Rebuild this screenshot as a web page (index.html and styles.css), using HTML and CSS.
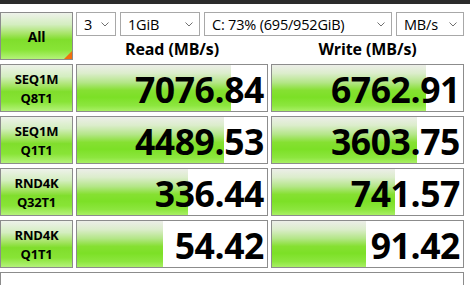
FILE: index.html
```html
<!DOCTYPE html>
<html>
<head>
<meta charset="utf-8">
<link rel="stylesheet" href="styles.css">
</head>
<body>
<div class="topbar"></div>
<div class="main">
  <div class="btn all">All<span class="corner"></span></div>
  <div class="head">
    <div class="combos">
      <div class="combo c1"><span>3</span><svg class="chev" width="8" height="5" viewBox="0 0 8 5"><polyline points="0.5,0.5 4,4 7.5,0.5" fill="none" stroke="#707070" stroke-width="1"/></svg></div>
      <div class="combo c2"><span>1GiB</span><svg class="chev" width="8" height="5" viewBox="0 0 8 5"><polyline points="0.5,0.5 4,4 7.5,0.5" fill="none" stroke="#707070" stroke-width="1"/></svg></div>
      <div class="combo c3"><span>C: 73% (695/952GiB)</span><svg class="chev" width="8" height="5" viewBox="0 0 8 5"><polyline points="0.5,0.5 4,4 7.5,0.5" fill="none" stroke="#707070" stroke-width="1"/></svg></div>
      <div class="combo c4"><span>MB/s</span><svg class="chev" width="8" height="5" viewBox="0 0 8 5"><polyline points="0.5,0.5 4,4 7.5,0.5" fill="none" stroke="#707070" stroke-width="1"/></svg></div>
    </div>
    <div class="titles">
      <div class="title">Read (MB/s)</div>
      <div class="title">Write (MB/s)</div>
    </div>
  </div>

  <div class="btn label"><span>SEQ1M</span><span>Q8T1</span></div>
  <div class="cell"><div class="bar" style="width:154px"></div><span class="num">7076.84</span></div>
  <div class="cell"><div class="bar" style="width:154px"></div><span class="num">6762.91</span></div>

  <div class="btn label"><span>SEQ1M</span><span>Q1T1</span></div>
  <div class="cell"><div class="bar" style="width:147px"></div><span class="num">4489.53</span></div>
  <div class="cell"><div class="bar" style="width:145px"></div><span class="num">3603.75</span></div>

  <div class="btn label"><span>RND4K</span><span>Q32T1</span></div>
  <div class="cell"><div class="bar" style="width:111px"></div><span class="num">336.44</span></div>
  <div class="cell"><div class="bar" style="width:123px"></div><span class="num">741.57</span></div>

  <div class="btn label"><span>RND4K</span><span>Q1T1</span></div>
  <div class="cell"><div class="bar" style="width:86px"></div><span class="num">54.42</span></div>
  <div class="cell"><div class="bar" style="width:94px"></div><span class="num">91.42</span></div>

  <div class="comment"></div>
</div>
</body>
</html>
```

FILE: styles.css
```css
* { box-sizing: border-box; }
html, body { margin: 0; padding: 0; background: #fff; overflow: hidden; }
body { width: 470px; height: 285px; font-family: "Open Sans", "Noto Sans", sans-serif; color: #000; }

.topbar { height: 4px; background: #2b2b2b; }

.main {
  padding-top: 8px;
  display: grid;
  grid-template-columns: 73px 192px 193px;
  grid-template-rows: 48px 48px 48px 48px 48px 13px;
  column-gap: 3px;
  row-gap: 4px;
}

.btn {
  border: 1px solid #8c8c8c;
  background: linear-gradient(to bottom, #eef2ea 0%, #d4eec0 25%, #a6e466 45%, #80de2c 58%, #88e436 80%, #b4f27a 100%);
  font-weight: 700;
  font-size: 13px;
  position: relative;
  display: flex;
  align-items: center;
  justify-content: center;
}
.all { font-size: 14px; letter-spacing: -0.3px; }
.corner {
  position: absolute; right: 0; bottom: 0;
  width: 0; height: 0;
  border-left: 8px solid transparent;
  border-bottom: 8px solid #f07010;
}
.label { flex-direction: column; line-height: 19px; letter-spacing: -0.2px; padding-top: 1px; }

.head { grid-column: 2 / 4; display: flex; flex-direction: column; }
.combos { display: flex; gap: 4px; height: 24px; }
.combo {
  border: 1px solid #a8a8a8;
  background: #fff;
  height: 24px;
  display: flex;
  align-items: center;
  justify-content: space-between;
  padding: 0 6px 0 7px;
  font-size: 14.5px;
  letter-spacing: -0.2px;
}
.c1 { width: 40px; }
.c2 { width: 80px; }
.c3 { width: 188px; }
.c4 { width: 68px; }
.chev { flex: none; display: block; }
.titles { display: flex; gap: 3px; flex: 1; align-items: center; padding-top: 2px; }
.title { font-weight: 700; font-size: 16px; text-align: center; letter-spacing: -0.1px; }
.title:first-child { width: 192px; }
.title:last-child { width: 193px; }

.cell {
  border: 1px solid #8c8c8c;
  background: #fff;
  position: relative;
  display: flex;
  align-items: center;
  justify-content: flex-end;
  padding-right: 3px;
}
.bar {
  position: absolute; left: 0; top: 0; bottom: 0;
  background: linear-gradient(to bottom, #eceee8 0%, #dcedcc 18%, #b4e688 38%, #86e032 55%, #7ce026 70%, #8ce63e 88%, #a8f064 100%);
}
.num {
  position: relative;
  font-weight: 700;
  font-size: 35.5px;
  letter-spacing: -0.4px;
  line-height: 1;
  padding-top: 3px;
}

.comment {
  grid-column: 1 / 4;
  border: 1px solid #8c8c8c;
  border-bottom: none;
}
```
